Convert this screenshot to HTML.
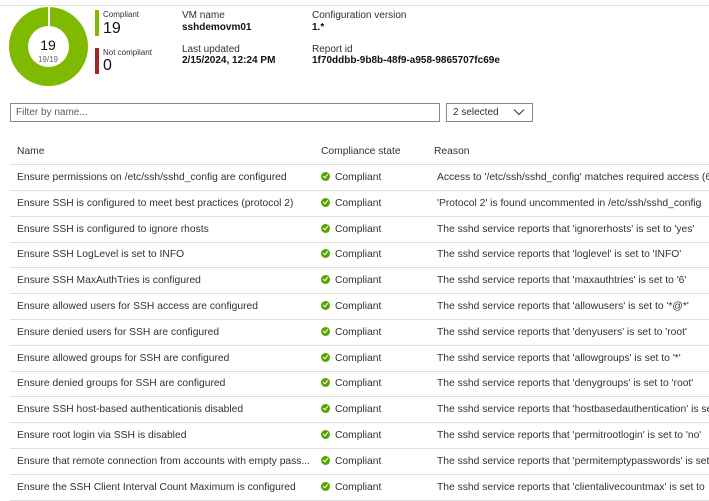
<!DOCTYPE html>
<html><head><style>
body{margin:0;width:709px;height:489px;overflow:hidden;background:#fff;font-family:"Segoe UI","Liberation Sans",sans-serif;color:#323130;position:relative}
.a{position:absolute;white-space:nowrap}
.s{font-size:10px}
.b{font-weight:bold;font-size:10px;color:#111}
.row{position:absolute;left:10px;width:699px;height:25.8px;border-bottom:1px solid #e1dfdd;font-size:10.3px}
.row span{position:absolute;top:7.5px;white-space:nowrap}
.ic{display:inline-block;width:9px;height:9px;border-radius:50%;background:#57a300;position:relative;vertical-align:-1px;margin-right:5px}
.ic:after{content:"";position:absolute;left:3px;top:1px;width:2px;height:4px;border:solid #fff;border-width:0 1.5px 1.5px 0;transform:rotate(40deg)}
</style></head><body>
<div class="a" style="left:0;top:5px;width:709px;height:1px;background:#e1dfdd"></div>
<div class="a" style="left:9px;top:7px;width:79px;height:79px;border-radius:50%;background:#7fba00"></div>
<div class="a" style="left:48px;top:7px;width:1.5px;height:20px;background:#fff"></div>
<div class="a" style="left:28px;top:26px;width:41px;height:41px;border-radius:50%;background:#fff"></div>
<div class="a" style="left:23px;top:37px;width:50px;text-align:center;font-size:14px;color:#111">19</div>
<div class="a" style="left:23px;top:55px;width:50px;text-align:center;font-size:8px;color:#666">19/19</div>
<div class="a" style="left:95px;top:10px;width:4px;height:26px;background:#7fba00"></div>
<div class="a" style="left:103px;top:10px;font-size:8px">Compliant</div>
<div class="a" style="left:103px;top:20px;font-size:16px;color:#111">19</div>
<div class="a" style="left:95px;top:48px;width:4px;height:26px;background:#a4262c"></div>
<div class="a" style="left:103px;top:48px;font-size:8px">Not compliant</div>
<div class="a" style="left:103px;top:57px;font-size:16px;color:#111">0</div>
<div class="a s" style="left:182px;top:10px">VM name</div>
<div class="a b" style="left:182px;top:22px">sshdemovm01</div>
<div class="a s" style="left:182px;top:44px">Last updated</div>
<div class="a b" style="left:182px;top:55px">2/15/2024, 12:24 PM</div>
<div class="a s" style="left:312px;top:10px">Configuration version</div>
<div class="a b" style="left:312px;top:22px">1.*</div>
<div class="a s" style="left:312px;top:44px">Report id</div>
<div class="a b" style="left:312px;top:55px">1f70ddbb-9b8b-48f9-a958-9865707fc69e</div>
<div class="a" style="left:10px;top:103px;width:428px;height:17px;border:1px solid #8a8886"></div>
<div class="a s" style="left:16px;top:107px;color:#605e5c">Filter by name...</div>
<div class="a" style="left:446px;top:103px;width:85px;height:17px;border:1px solid #8a8886"></div>
<div class="a s" style="left:453px;top:107px">2 selected</div>
<svg class="a" style="left:513px;top:108px" width="12" height="8"><path d="M1 1.5 L6 6.5 L11 1.5" stroke="#323130" fill="none"/></svg>
<div class="row" style="top:138px"><span style="left:7px">Name</span><span style="left:311px">Compliance state</span><span style="left:424px">Reason</span></div>
<div class="row" style="top:164px"><span style="left:7px">Ensure permissions on /etc/ssh/sshd_config are configured</span><span style="left:311px"><i class="ic"></i>Compliant</span><span style="left:427px">Access to '/etc/ssh/sshd_config' matches required access (6</span></div>
<div class="row" style="top:190px"><span style="left:7px">Ensure SSH is configured to meet best practices (protocol 2)</span><span style="left:311px"><i class="ic"></i>Compliant</span><span style="left:427px">'Protocol 2' is found uncommented in /etc/ssh/sshd_config</span></div>
<div class="row" style="top:216px"><span style="left:7px">Ensure SSH is configured to ignore rhosts</span><span style="left:311px"><i class="ic"></i>Compliant</span><span style="left:427px">The sshd service reports that 'ignorerhosts' is set to 'yes'</span></div>
<div class="row" style="top:241px"><span style="left:7px">Ensure SSH LogLevel is set to INFO</span><span style="left:311px"><i class="ic"></i>Compliant</span><span style="left:427px">The sshd service reports that 'loglevel' is set to 'INFO'</span></div>
<div class="row" style="top:267px"><span style="left:7px">Ensure SSH MaxAuthTries is configured</span><span style="left:311px"><i class="ic"></i>Compliant</span><span style="left:427px">The sshd service reports that 'maxauthtries' is set to '6'</span></div>
<div class="row" style="top:293px"><span style="left:7px">Ensure allowed users for SSH access are configured</span><span style="left:311px"><i class="ic"></i>Compliant</span><span style="left:427px">The sshd service reports that 'allowusers' is set to '*@*'</span></div>
<div class="row" style="top:319px"><span style="left:7px">Ensure denied users for SSH are configured</span><span style="left:311px"><i class="ic"></i>Compliant</span><span style="left:427px">The sshd service reports that 'denyusers' is set to 'root'</span></div>
<div class="row" style="top:345px"><span style="left:7px">Ensure allowed groups for SSH are configured</span><span style="left:311px"><i class="ic"></i>Compliant</span><span style="left:427px">The sshd service reports that 'allowgroups' is set to '*'</span></div>
<div class="row" style="top:370px"><span style="left:7px">Ensure denied groups for SSH are configured</span><span style="left:311px"><i class="ic"></i>Compliant</span><span style="left:427px">The sshd service reports that 'denygroups' is set to 'root'</span></div>
<div class="row" style="top:396px"><span style="left:7px">Ensure SSH host-based authenticationis disabled</span><span style="left:311px"><i class="ic"></i>Compliant</span><span style="left:427px">The sshd service reports that 'hostbasedauthentication' is set</span></div>
<div class="row" style="top:422px"><span style="left:7px">Ensure root login via SSH is disabled</span><span style="left:311px"><i class="ic"></i>Compliant</span><span style="left:427px">The sshd service reports that 'permitrootlogin' is set to 'no'</span></div>
<div class="row" style="top:448px"><span style="left:7px">Ensure that remote connection from accounts with empty pass...</span><span style="left:311px"><i class="ic"></i>Compliant</span><span style="left:427px">The sshd service reports that 'permitemptypasswords' is set</span></div>
<div class="row" style="top:474px"><span style="left:7px">Ensure the SSH Client Interval Count Maximum is configured</span><span style="left:311px"><i class="ic"></i>Compliant</span><span style="left:427px">The sshd service reports that 'clientalivecountmax' is set to</span></div>
</body></html>
